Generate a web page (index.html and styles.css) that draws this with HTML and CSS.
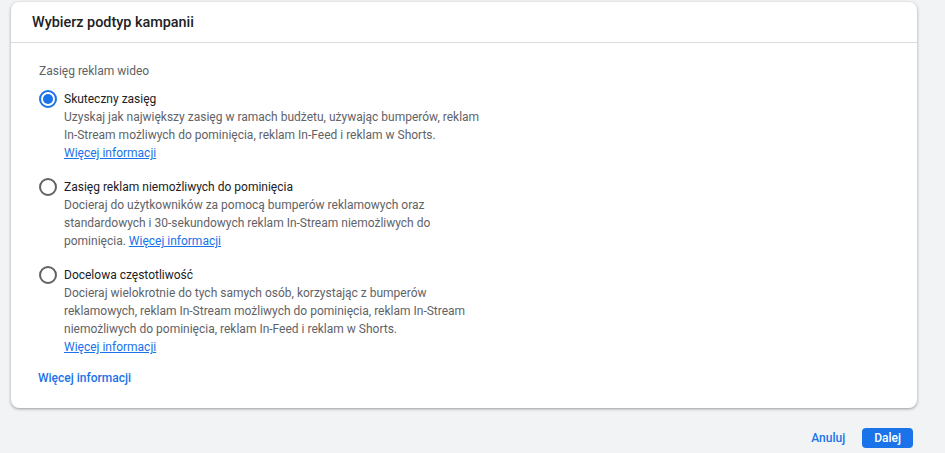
FILE: index.html
```html
<!DOCTYPE html>
<html lang="pl">
<head>
<meta charset="utf-8">
<title>Wybierz podtyp kampanii</title>
<link rel="stylesheet" href="styles.css">
</head>
<body>
<div class="page">
  <section class="card">
    <header class="card-header">Wybierz podtyp kampanii</header>
    <div class="card-body">
      <div class="section-label">Zasięg reklam wideo</div>
      <div class="options">
        <label class="option">
          <span class="radio checked"></span>
          <span class="option-text">
            <span class="option-title">Skuteczny zasięg</span>
            <span class="option-desc">Uzyskaj jak największy zasięg w ramach budżetu, używając bumperów, reklam<br>In-Stream możliwych do pominięcia, reklam In-Feed i reklam w Shorts.<br><a class="link" href="#">Więcej informacji</a></span>
          </span>
        </label>
        <label class="option">
          <span class="radio"></span>
          <span class="option-text">
            <span class="option-title">Zasięg reklam niemożliwych do pominięcia</span>
            <span class="option-desc">Docieraj do użytkowników za pomocą bumperów reklamowych oraz<br>standardowych i 30-sekundowych reklam In-Stream niemożliwych do<br>pominięcia. <a class="link" href="#">Więcej informacji</a></span>
          </span>
        </label>
        <label class="option">
          <span class="radio"></span>
          <span class="option-text">
            <span class="option-title">Docelowa częstotliwość</span>
            <span class="option-desc">Docieraj wielokrotnie do tych samych osób, korzystając z bumperów<br>reklamowych, reklam In-Stream możliwych do pominięcia, reklam In-Stream<br>niemożliwych do pominięcia, reklam In-Feed i reklam w Shorts.<br><a class="link" href="#">Więcej informacji</a></span>
          </span>
        </label>
      </div>
      <a class="more-link" href="#">Więcej informacji</a>
    </div>
  </section>
  <div class="actions">
    <button class="btn-text" type="button">Anuluj</button>
    <button class="btn-primary" type="button">Dalej</button>
  </div>
</div>
</body>
</html>
```

FILE: styles.css
```css
* { box-sizing: border-box; }
html, body {
  margin: 0;
  padding: 0;
  background: #f1f3f4;
  font-family: Roboto, "Noto Sans", Arial, sans-serif;
  color: #202124;
}
.page {
  padding: 2px 28px 0 11px;
}
.card {
  background: #fff;
  border-radius: 8px;
  box-shadow: 0 1px 2px rgba(60,64,67,.3), 0 1px 3px 1px rgba(60,64,67,.15);
}
.card-header {
  height: 41px;
  display: flex;
  align-items: center;
  padding: 0 21px;
  border-bottom: 1px solid #dadce0;
  font-size: 14.4px;
  font-weight: 500;
  color: #202124;
}
.card-body {
  padding: 19px 28px 21px 28px;
  font-size: 12px;
  line-height: 18px;
}
.section-label {
  color: #5f6368;
  margin-bottom: 10px;
}
.options {
  display: flex;
  flex-direction: column;
  gap: 16px;
}
.option {
  display: flex;
  align-items: flex-start;
  gap: 7px;
  cursor: pointer;
}
.radio {
  flex: none;
  width: 18px;
  height: 18px;
  border: 2px solid #5f6368;
  border-radius: 50%;
  display: flex;
  align-items: center;
  justify-content: center;
}
.radio.checked {
  border-color: #1a73e8;
}
.radio.checked::after {
  content: "";
  width: 10px;
  height: 10px;
  border-radius: 50%;
  background: #1a73e8;
}
.option-text {
  display: flex;
  flex-direction: column;
}
.option-title {
  color: #202124;
}
.option-desc {
  color: #5f6368;
}
.link {
  color: #1a73e8;
  text-decoration: underline;
}
.more-link {
  display: inline-block;
  margin-top: 13px;
  margin-left: -1px;
  color: #1a73e8;
  font-weight: 500;
  text-decoration: none;
}
.actions {
  display: flex;
  justify-content: flex-end;
  align-items: center;
  gap: 10px;
  margin-top: 20px;
  padding-right: 4px;
}
.btn-text, .btn-primary {
  font-family: Roboto, "Noto Sans", Arial, sans-serif;
  font-size: 12px;
  font-weight: 500;
  border: none;
  border-radius: 4px;
  height: 20px;
  line-height: 20px;
  padding: 0 7px;
  cursor: pointer;
}
.btn-text {
  background: transparent;
  color: #1a73e8;
}
.btn-primary {
  background: #1a73e8;
  color: #fff;
  padding: 0 12px;
}
```
